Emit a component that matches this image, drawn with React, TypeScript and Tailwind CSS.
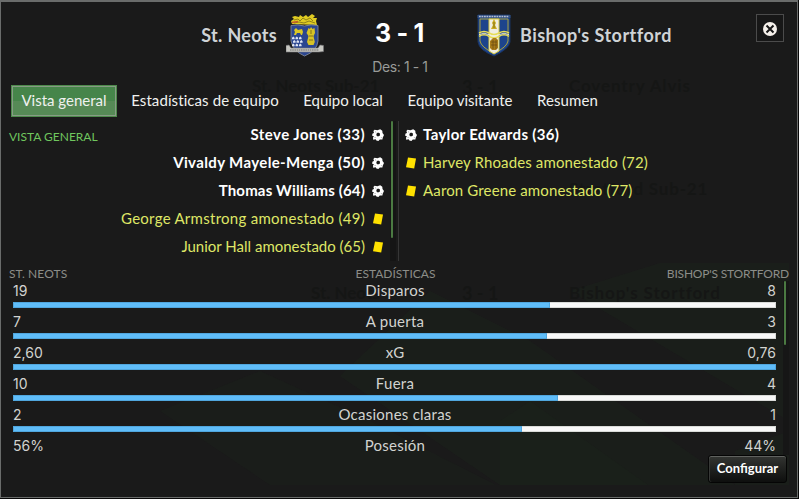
import clsx from 'clsx';

interface MatchEvent {
  type: 'goal' | 'card';
  label: string;
  tracking?: string;
}

interface Stat {
  name: string;
  home: string;
  away: string;
  fill: number;
}

const tabs = [
  { label: 'Vista general', style: 'w-[106px]' },
  { label: 'Estadísticas de equipo', style: 'w-[166px] tracking-[.09px]' },
  { label: 'Equipo local', style: 'w-[100px]' },
  { label: 'Equipo visitante', style: 'w-[124px]' },
  { label: 'Resumen', style: 'w-[81px] tracking-[.1px]' },
];

const homeEvents: MatchEvent[] = [
  { type: 'goal', label: 'Steve Jones (33)', tracking: 'tracking-[.45px]' },
  { type: 'goal', label: 'Vivaldy Mayele-Menga (50)', tracking: 'tracking-[.37px]' },
  { type: 'goal', label: 'Thomas Williams (64)', tracking: 'tracking-[.16px]' },
  { type: 'card', label: 'George Armstrong amonestado (49)', tracking: 'tracking-[.28px]' },
  { type: 'card', label: 'Junior Hall amonestado (65)' },
];

const awayEvents: MatchEvent[] = [
  { type: 'goal', label: 'Taylor Edwards (36)', tracking: 'tracking-[.32px]' },
  { type: 'card', label: 'Harvey Rhoades amonestado (72)', tracking: 'tracking-[.13px]' },
  { type: 'card', label: 'Aaron Greene amonestado (77)', tracking: 'tracking-[.14px]' },
];

// fill is the home share of the 763px bar
const stats: Stat[] = [
  { name: 'Disparos', home: '19', away: '8', fill: 537 },
  { name: 'A puerta', home: '7', away: '3', fill: 534 },
  { name: 'xG', home: '2,60', away: '0,76', fill: 763 },
  { name: 'Fuera', home: '10', away: '4', fill: 545 },
  { name: 'Ocasiones claras', home: '2', away: '1', fill: 509 },
];

function BallIcon() {
  return (
    <svg width="12" height="12" viewBox="0 0 12 12" className="shrink-0">
      <path
        d="M2.6.8 5.4 1.3 8.2.3 10.3 1.8 10.5 4 12 6 10.8 8.4 10.4 10.4 7.8 10.4 6.4 12 4.4 11.4 3.6 10.2 1.2 10.8 1 8.6 2 7.4 0 6.4.6 4.6 2 4 1.4 2Z"
        fill="#fff"
      />
      <path d="M6 3.4 8 4.4 7.8 6.8 5.8 7.6 4.3 6.2 4.6 4.4Z" fill="#1a1a1a" />
      <path d="M3 2.6 4.2 3.4M2.6 9 3.6 8M9.2 8.2 9.8 9.2" stroke="#8a8a8a" strokeWidth=".7" />
    </svg>
  );
}

function CardIcon() {
  return (
    <svg width="12" height="12" viewBox="0 0 12 12" className="shrink-0">
      <path d="M3 .5 11 1.6 9.2 11.5 1 10.2Z" fill="#ffe100" />
    </svg>
  );
}

function HomeCrest() {
  return (
    <svg width="38" height="43" viewBox="0 0 38 43" className="shrink-0">
      <path
        d="M6 10 5 7 8 5 6 3 9 2 13 3 14 1 17 3 20 1 22 3 26 0 29 2 27 4 31 4 30 7 31 11Z"
        fill="#e0cc22"
      />
      <path
        d="M8 6 12 5 14 7 17 4 20 6 24 4 27 7M8 9 13 8 18 9 23 7 29 9"
        stroke="#6b6015"
        strokeWidth=".7"
        fill="none"
      />
      <path d="M6 8.5 12 7.5" stroke="#c65a28" strokeWidth="1.3" />
      <path
        d="M5 11.5Q12 10 18.5 12Q25 10 32 11.5V27Q31 37 18.5 42Q7 37 5 27Z"
        fill="#2b4690"
        stroke="#7f8796"
        strokeWidth=".9"
      />
      <path d="M8 16 10 14 12 16 16 15 17 18 16 21H15L14 19H11L10 21H8L9 18Z" fill="#dbc824" />
      {[22.5, 26, 29.5].map((y, row) =>
        [7.3, 10.8, 14.3].map((x) => (
          <path
            key={`${y}-${x}`}
            d={`M${x + (row % 2)} ${y}l1.3 1.2v1.6h-2.6v-1.6Z`}
            fill="#dfe5f3"
          />
        )),
      )}
      <path
        d="M22.5 14 24 15 25 13 26.5 15 28.5 14 29 19 27.5 22 28.8 28 27.5 31H22.5L21 28 22.5 22 20.5 19Z"
        fill="#d8c326"
      />
      <path d="M25 16V20M23 22H27M23 26H27" stroke="#786a19" strokeWidth=".9" />
      <path
        d="M0 31.5 3 31 5 34H32L34 31 37.5 31.5V37.5L33 38H5L0 38Z"
        fill="#c8c8c2"
        stroke="#77777a"
        strokeWidth=".6"
      />
      <path d="M4 36H33" stroke="#6a6a6a" strokeWidth="1.2" strokeDasharray="1.6 .6" />
    </svg>
  );
}

function AwayCrest() {
  return (
    <svg width="34" height="43" viewBox="0 0 34 43" className="shrink-0">
      <path
        d="M1 1H33V28Q32 35 17 42Q2 36 1 28Z"
        fill="#1d448c"
        stroke="#19325f"
        strokeWidth="1"
      />
      <path d="M3 5H31V27Q30 33 17 39.5Q4 33 3 27Z" fill="none" stroke="#b8ac35" strokeWidth=".9" />
      <path d="M12 5H22V37L17 40 12 37Z" fill="#f0eee2" stroke="#d7c941" strokeWidth="1" />
      <path d="M.5 1H33.5V4H.5Z" fill="#304f80" />
      <path d="M2 2.5H32" stroke="#b4bdd4" strokeWidth="1.4" strokeDasharray="1.8 .7" />
      <path d="M17 5 19 9 18 11 20 15H14L16 11 15 9Z" fill="#c9ab22" />
      <path d="M17 8V14" stroke="#756518" strokeWidth=".8" />
      <path
        d="M2 19Q7 16 12 19T22 19T32 19M2 22.3Q7 19.3 12 22.3T22 22.3T32 22.3"
        stroke="#e7dc56"
        strokeWidth="1.5"
        fill="none"
      />
      <path d="M2 20.7Q7 17.7 12 20.7T22 20.7T32 20.7" stroke="#f0efd6" strokeWidth=".9" fill="none" />
      <path d="M14 26 16 24H19L21 26V34L19 36H15L13 34V27Z" fill="#a87b1a" />
      <path d="M14 28H20M14 31H20M16 26V35M19 26V35" stroke="#684811" strokeWidth=".7" />
    </svg>
  );
}

function Backdrop() {
  return (
    <div className="pointer-events-none absolute inset-0 font-bold text-[#151615] select-none">
      <svg width="796" height="496" viewBox="1 1 796 496" className="absolute inset-0">
        <path d="M260 370 370 420 496 484H270L160 410Z" fill="#1b201a" opacity=".6" />
        <path d="M430 290 530 340 735 484H500L340 375Z" fill="#1b211b" opacity=".7" />
        <path d="M570 290 660 262H789V420Z" fill="#1b211b" opacity=".7" />
        <path d="M530 400 648 484H500V420Z" fill="#1a211a" opacity=".6" />
        <path d="M735 450 789 430V484H735Z" fill="#1b211b" opacity=".6" />
      </svg>
      <span className="absolute top-[71px] left-[251px] text-[17px]">St. Neots Sub-21</span>
      <span className="absolute top-[72px] left-[461px] text-[18px]">3 - 1</span>
      <span className="absolute top-[71px] left-[568px] text-[17px] tracking-[.9px]">
        Coventry Alvis
      </span>
      <span className="absolute top-[174px] left-[568px] text-[17px] tracking-[.8px]">
        Stratford Sub-21
      </span>
      <span className="absolute top-[278px] left-[310px] text-[17px]">St. Neots</span>
      <span className="absolute top-[278px] left-[461px] text-[18px]">3 - 1</span>
      <span className="absolute top-[278px] left-[568px] text-[17px] tracking-[.9px]">
        Bishop's Stortford
      </span>
    </div>
  );
}

function EventRow({ event, away = false }: { event: MatchEvent; away?: boolean }) {
  return (
    <div
      className={clsx(
        'flex h-7 items-center whitespace-nowrap',
        away ? 'gap-[6px]' : 'flex-row-reverse gap-[7px]',
        event.type === 'goal' ? 'font-bold text-white' : 'text-[#dfe666]',
      )}
    >
      {event.type === 'goal' ? <BallIcon /> : <CardIcon />}
      <span className={clsx('pb-px', event.tracking)}>{event.label}</span>
    </div>
  );
}

function StatLabels({ home, name, away }: { home: string; name: string; away: string }) {
  return (
    <div className="grid h-[21px] grid-cols-3 leading-[18px]">
      <span className="pt-px font-['Inter',sans-serif] text-[14px]">{home}</span>
      <span className="pl-px text-center tracking-[.25px]">{name}</span>
      <span className="pt-px text-right font-['Inter',sans-serif] text-[14px]">{away}</span>
    </div>
  );
}

function StatRow({ stat }: { stat: Stat }) {
  return (
    <div className="h-[31px]">
      <StatLabels home={stat.home} name={stat.name} away={stat.away} />
      <div className="flex h-[6px] bg-[#f8f8f8] shadow-[inset_0_0_0_1px_#d9dbd8]">
        <div
          className="bg-[#5fbdf9] shadow-[inset_0_0_0_1px_#50a6dd]"
          style={{ width: stat.fill }}
        />
      </div>
    </div>
  );
}

export default function App() {
  return (
    <div className="h-[499px] w-[799px] bg-[#080808] font-['Lato','Noto_Sans',sans-serif] text-[15px]">
      <div className="relative h-[498px] w-[798px] overflow-hidden border border-t-2 border-[#6a6c6b] bg-[#1a1a1a]">
        <Backdrop />
        <div className="relative flex h-full flex-col">
          {/* Marcador */}
          <header className="grid h-[83px] grid-cols-[323px_153px_1fr_42px]">
            <div className="flex h-[66px] items-center justify-end gap-[9px] text-[18px] font-bold text-[#cfd3d6]">
              <span className="tracking-[.33px]">St. Neots</span>
              <HomeCrest />
            </div>
            <div className="flex flex-col items-center pt-[16px] pr-[2px] font-['Inter',sans-serif]">
              <div className="text-[25px] leading-[30px] font-bold tracking-[-.3px] text-white">
                3 - 1
              </div>
              <div className="pt-[9px] pl-px text-[14px] leading-[20px] tracking-[-.4px] text-[#999b98]">
                Des: 1 - 1
              </div>
            </div>
            <div className="flex h-[66px] items-center gap-[9px] text-[18px] font-bold text-[#cfd3d6]">
              <AwayCrest />
              <span className="tracking-[.47px]">Bishop's Stortford</span>
            </div>
            <button className="mt-[12px] ml-px flex h-7 w-7 items-center justify-center border border-[#4b4b4b] bg-[#171717]">
              <svg width="14" height="14" viewBox="0 0 14 14" className="mt-px">
                <circle cx="7" cy="7" r="7" fill="#f5f0ea" />
                <path d="m3.5 3.5 7 7m0-7-7 7" stroke="#171717" strokeWidth="2" />
              </svg>
            </button>
          </header>

          {/* Pestañas */}
          <nav className="flex h-8 gap-[5px] pl-[10px] text-[#f0f1ef]">
            {tabs.map((tab, i) => (
              <button
                key={tab.label}
                className={clsx(
                  'shrink-0 pb-px text-center whitespace-nowrap',
                  tab.style,
                  i === 0 &&
                    'border border-[#4d8a4b] bg-[linear-gradient(#46854a_50%,#568a56_50%)] shadow-[inset_0_0_0_1px_#879c85]',
                )}
              >
                {tab.label}
              </button>
            ))}
          </nav>

          {/* Eventos */}
          <section className="mt-1 flex h-[141px]">
            <div className="flex w-[389px] pr-[6px] pl-2">
              <h2 className="pt-[7px] text-[12px] leading-[18px] whitespace-nowrap text-[#70c65e]">
                VISTA GENERAL
              </h2>
              <div className="flex-1">
                {homeEvents.map((event) => (
                  <EventRow key={event.label} event={event} />
                ))}
              </div>
            </div>
            <div className="h-[140px] w-[6px] bg-[#151515] pl-px">
              <div className="h-[117px] w-[2px] rounded-sm bg-[#4b7a42]" />
            </div>
            <div className="ml-[2px] h-[140px] w-px bg-[#363636]" />
            <div className="pl-[6px]">
              {awayEvents.map((event) => (
                <EventRow key={event.label} event={event} away />
              ))}
            </div>
          </section>

          {/* Estadísticas */}
          <section className="pr-[8px] pl-2 text-[#d2d3d0]">
            <div className="grid h-[19px] grid-cols-[258px_1fr_258px] items-center pt-[3px] text-[12px] text-[#8c8d88]">
              <span className="tracking-[.1px]">ST. NEOTS</span>
              <span className="pr-[7px] text-center">ESTADÍSTICAS</span>
              <span className="text-right tracking-[-.2px]">BISHOP'S STORTFORD</span>
            </div>
            <div className="flex h-[174px]">
              <div className="ml-1 w-[763px]">
                {stats.map((stat) => (
                  <StatRow key={stat.name} stat={stat} />
                ))}
                <StatLabels home="56%" name="Posesión" away="44%" />
              </div>
              <div className="ml-[7px] w-[6px] bg-[#161616] pl-px">
                <div className="h-[64px] w-[2px] rounded-sm bg-[#4b7a42]" />
              </div>
            </div>
          </section>

          <footer className="flex justify-end pr-[10px]">
            <button className="h-7 w-[79px] rounded-[3px] border border-[#050505] bg-linear-to-b from-[#333532] to-[#0e0f0e] text-[13px] font-bold text-white shadow-[inset_0_1px_0_#60625f,inset_1px_0_0_#373937]">
              Configurar
            </button>
          </footer>
        </div>
      </div>
    </div>
  );
}
